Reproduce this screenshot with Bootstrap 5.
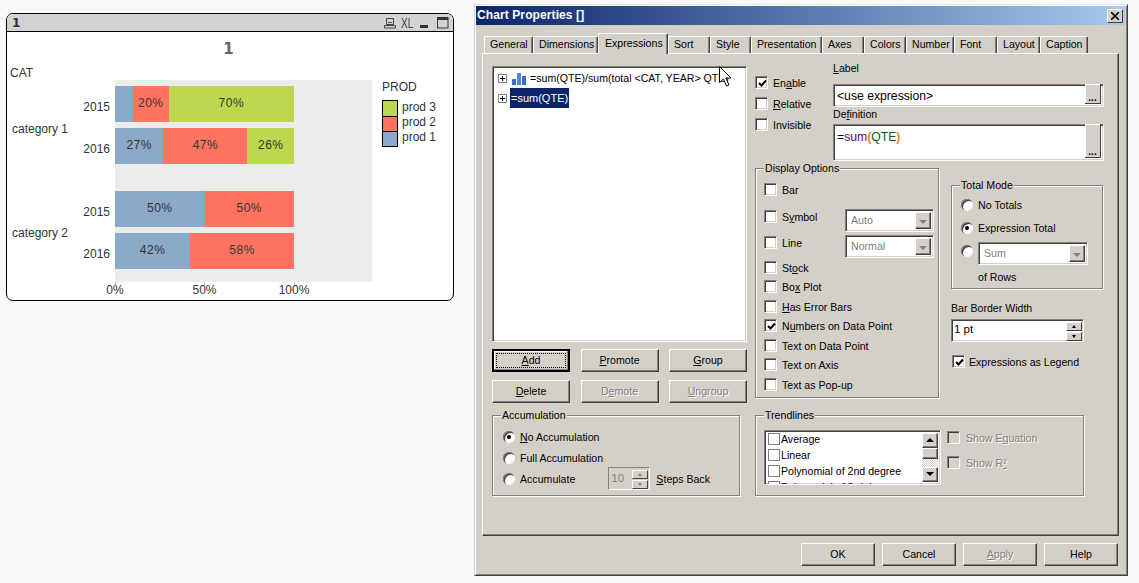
<!DOCTYPE html>
<html lang="en">
<head>
<meta charset="utf-8">
<title>Chart Properties</title>
<link rel="stylesheet" href="https://cdn.jsdelivr.net/npm/bootstrap@5.3.0/dist/css/bootstrap.min.css">
<style>
html,body{height:100%;margin:0;overflow:hidden}
body{background:#f9f9f9;font-family:"Liberation Sans",Arial,sans-serif;font-size:10.6px;color:#000;line-height:19px}
u{text-underline-offset:1px}
/* chart window */
.qv-win{position:absolute;left:6px;top:13px;width:448px;height:288px;border:1px solid #000;border-radius:7px;background:#fff;overflow:hidden;color:#333;font-size:12px;line-height:14px}
.qv-head{height:18px;background:#d3d3d3;border-bottom:1px solid #000;padding:0 4px 0 5px}
.qv-num{font:bold 12px/18px "DejaVu Sans",sans-serif;color:#333}
.qv-xl{font:14px/16px "Liberation Sans",sans-serif;color:#444;width:10px;margin-left:5px;display:inline-block;transform:scaleX(.72);transform-origin:left center}
.qv-title{font:bold 15px/20px "DejaVu Sans",sans-serif;color:#666;text-align:center;height:20px;margin-top:7px;padding-right:3px}
.qv-chart{margin-top:-3px}
.c-cat{width:68px;padding-left:4px;padding-top:10px}
.c-cat div:nth-child(1){margin-left:-1px}
.c-cat div:nth-child(2){margin-top:42px;margin-left:1px}
.c-cat div:nth-child(3){margin-top:90px;margin-left:1px}
.c-year{width:40px;padding-top:33px;padding-right:5px;text-align:right}
.c-year div{height:36px;line-height:36px;margin-bottom:6px}
.c-year div:nth-child(2){margin-bottom:27px}
.c-plot-wrap{width:257px}
.c-plot{height:202px;background:#ececec;padding-top:6px;margin-top:24px}
.c-bar{height:36px;width:179px;margin-bottom:6px;line-height:35px;text-align:center;letter-spacing:.5px}
.c-bar:nth-child(2){margin-bottom:27px}
.s-b{background:#8ca9c9}.s-r{background:#ff7360}.s-g{background:#bcd750}
.c-axis{width:179px}
.c-tick{width:0;display:flex;flex-direction:column;align-items:center;white-space:nowrap}
.c-tick i{display:block;width:1px;height:3px;background:#bbb;flex:none}
.c-tick span{line-height:13px;margin-top:-1px}
.c-leg{margin-left:10px;padding-top:24px}
.c-leg-t{height:15px;line-height:14px}
.c-leg-box{border:1px solid #000;margin-top:5px;width:16px}
.c-leg-box div{height:15px}
.c-leg-box div+div{border-top:1px solid #000}
.c-leg-lab{margin-top:5px}
.c-leg-lab div{height:15px;line-height:15px}
/* dialog */
.dlg{position:absolute;left:474px;top:4px;width:654px;height:572px;background:#d4d0c8;border:1px solid;border-color:#e8e6e1 #404040 #404040 #d4d0c8;box-shadow:inset 1px 1px 0 #fff,inset -1px -1px 0 #808080;padding:1px}
.dlg-bar{height:19px;width:649px;background:linear-gradient(90deg,#0a246a,#a6caf0);color:#fff;font-weight:bold;font-size:12px;line-height:19px;padding:0 2px 0 1px;letter-spacing:.1px}
.dlg-x{width:16px;height:14px;background:#d4d0c8;border:1px solid;border-color:#fff #404040 #404040 #fff}
.tabs{margin:8px 0 0 8px;height:20px;flex-wrap:nowrap;list-style:none;padding:0;position:relative;z-index:1}
.tabs li{height:17px;margin-top:3px;border:1px solid;border-color:#fff #404040 #d4d0c8 #fff;border-bottom:0;border-radius:2px 2px 0 0;text-align:left;padding-left:5px;white-space:nowrap;line-height:15px;background:#d4d0c8;box-shadow:inset -1px 0 0 #808080;flex:none}
.tabs li:nth-child(1){width:49px}.tabs li:nth-child(2){width:65px}.tabs li:nth-child(3){width:70px}.tabs li:nth-child(4){width:42px}
.tabs li:nth-child(5){width:41px}.tabs li:nth-child(6){width:71px}.tabs li:nth-child(7){width:42px}.tabs li:nth-child(8){width:42px}
.tabs li:nth-child(9){width:48px}.tabs li:nth-child(10){width:43px}.tabs li:nth-child(11){width:43px}.tabs li:nth-child(12){width:48px}
.tabs li.on{height:21px;margin-top:0;line-height:19px;padding-left:6px}
.panel{margin-left:6px;width:637px;height:483px;border:1px solid;border-color:#fff #404040 #404040 #fff;box-shadow:inset -1px -1px 0 #808080;padding:12px 0 0 9px}
.sunk{background:#fff;border:1px solid;border-color:#808080 #fff #fff #808080;box-shadow:inset 1px 1px 0 #404040,inset -1px -1px 0 #d4d0c8}
.col-left{width:255px;flex:none}
.tree{height:276px;padding:1px 0 0 4px;overflow:hidden;white-space:nowrap}
.tree-row{height:20px;line-height:20px;gap:3px;font-size:11px}
.tree-first{font-size:10.6px;gap:3px}
.tree-ico{margin-left:2px;margin-right:0}
.expander{width:9px;height:9px;background:#fff;border:1px solid #808080;flex:none;position:relative;margin-left:1px}
.expander::before{content:"";position:absolute;left:1px;top:3px;width:5px;height:1px;background:#000}
.expander::after{content:"";position:absolute;left:3px;top:1px;width:1px;height:5px;background:#000}
.sel{background:#0a246a;color:#fff;padding:0 1px}
.wbtn.btn{--bs-btn-padding-x:0;--bs-btn-padding-y:0;--bs-btn-font-size:10.6px;--bs-btn-line-height:19px;--bs-btn-border-radius:0;--bs-btn-color:#000;--bs-btn-bg:#d4d0c8;--bs-btn-hover-bg:#d4d0c8;--bs-btn-border-width:1px;width:78px;height:23px;border-color:#fff #404040 #404040 #fff;box-shadow:inset -1px -1px 0 #808080;font-family:inherit;text-align:center}
.wbtn.off{color:#808080;text-shadow:1px 1px 0 #fff}
.wbtn.def{outline:1px solid #000;outline-offset:-1px;border:2px solid #000;position:relative;box-shadow:inset -1px -1px 0 #808080,inset 1px 1px 0 #fff}
.wbtn.def::after{content:"";position:absolute;inset:2px;border:1px dotted #000}
.wbtn.wide{width:74px}
.btn-row2{margin-top:8px}
.btn-row1{margin-top:7px}
.col-right{margin-left:8px;width:349px;flex:none}
.chk-col{width:78px;padding-top:7px;flex:none}
.line19{height:19px;line-height:19px;white-space:nowrap}
.line19>span:not(.cb):not(.rd):not(.spn-lab){padding-top:2px}
.chk-col .line19{gap:5px;margin-bottom:2px}
.cb{width:13px;height:13px;flex:none;display:block;position:relative}
.cb svg{position:absolute;left:1px;top:1px}
.cb.dis{background:#d4d0c8}
.lab-col{width:271px;margin-top:-6px}
.lab16{height:16px;line-height:17px}
.defn{margin-top:-1px;line-height:16px}
.inp{height:23px;padding-left:3px;line-height:23px;font-size:12.2px;position:relative}
.more{position:absolute;right:2px;bottom:2px;width:16px;background:#d4d0c8;border-right:1px solid #404040;border-bottom:1px solid #404040;text-align:center;font-weight:bold;font-size:10px;line-height:12px;height:20px;padding-top:8px;box-shadow:inset 1px 1px 0 #fff}
.txta{height:37px;margin-top:2px;padding:1px 0 0 3px}
.more.tall{height:34px;padding-top:22px}
.syn-p{color:#5a0a6e}.syn-g{color:#0a5a14}.syn-o{color:#ff7a1e;font-weight:bold}
.grp{border:1px solid #808080;box-shadow:1px 1px 0 #fff,inset 1px 1px 0 #fff;position:relative}
.grp-t{position:absolute;left:8px;top:-8px;background:#d4d0c8;padding:0 1px;line-height:15px;white-space:nowrap}
.g-disp{width:184px;height:230px;margin-top:7px;padding:11px 4px 0 8px;flex:none}
.g-disp .line19{gap:5px}
.s7{margin-top:7px}.s1{margin-top:1px}.s0{margin-top:0}
.sel-box{height:23px;background:#fff;color:#808080;padding-left:5px;line-height:21px;position:relative;font-size:10.6px}
.sel-a{width:89px;margin:3px 0 0 auto}
.sel-b{width:110px;margin-top:1px}
.arr{position:absolute;right:2px;top:2px;bottom:2px;width:16px;background:#d4d0c8;border:1px solid;border-color:#fff #404040 #404040 #fff;box-shadow:inset -1px -1px 0 #808080}
.line19>.sel-box>.arr{padding:0}
.arr::after{content:"";position:absolute;left:3px;top:7px;border:4px solid transparent;border-top:4px solid #808080;border-bottom:0}
.col-tot{margin-left:12px;width:152px}
.g-tot{height:104px;margin-top:24px;padding:9px 0 0 9px}
.rd{width:12px;height:12px;border-radius:50%;background:#fff;flex:none;display:block;position:relative;box-shadow:inset 1px 1px 0 #808080,inset 2px 2px 0 #404040,inset -1px -1px 0 #f4f3f0;border:0}
.rd.on::after{content:"";position:absolute;left:4px;top:4px;width:4px;height:4px;border-radius:50%;background:#000}
.rd.raised{margin-bottom:4px}
.g-tot .line19{gap:5px}
.m4{margin-top:4px}.m5{margin-top:5px}.m6{margin-top:6px}
.ofrows{margin-left:17px;padding-top:1px}
.bbw{margin-top:11px;height:16px;line-height:16px}
.bbw-in{width:133px;height:23px;margin-top:3px;padding-left:2px;line-height:19px;font-size:11.5px;position:relative}
.spin{position:absolute;right:1px;top:2px;width:16px;height:19px}
.spin i{display:block;height:9px;background:#d4d0c8;border:1px solid;border-color:#fff #404040 #404040 #fff;position:relative;margin-bottom:1px}
.spin i::after{content:"";position:absolute;left:5px;top:2px;border:2px solid transparent;border-bottom:3px solid #000;border-top:0}
.spin i+i::after{border-top:3px solid #000;border-bottom:0}
.spin.dim i::after{border-bottom-color:#808080;border-top-color:#808080}
.leg-chk{margin-top:10px;gap:4px;margin-left:1px}
.bottom-row{margin-top:12px}
.g-acc{width:248px;height:81px;padding:11px 0 0 10px;flex:none}
.g-acc .line19{gap:5px}
.m2{margin-top:2px}
.spn-box{width:42px;height:23px;margin-left:28px;background:#d4d0c8;color:#808080;border:1px solid;border-color:#808080 #fff #fff #808080;padding-left:2px;position:relative;line-height:21px;font-size:11.5px;flex:none}
.spn-lab{margin-left:1px;margin-top:1px;align-self:flex-start}
.g-trend{width:329px;height:81px;margin-left:15px;padding:14px 0 0 8px;flex:none;gap:6px}
.lstb{width:177px;height:55px;overflow:hidden;position:relative;padding:0 0 0 3px}
.lst-i{height:16px;line-height:16px;gap:1px;white-space:nowrap;font-size:10.6px}
.cb.flat{width:12px;height:12px;border:1px solid #808080;background:#fff;box-shadow:none}
.sb{position:absolute;right:2px;top:2px;bottom:2px;width:16px;background:repeating-conic-gradient(#d4d0c8 0 25%,#fff 0 50%) 0 0/2px 2px}
.sb b{display:block;background:#d4d0c8;border:1px solid;border-color:#fff #404040 #404040 #fff;box-shadow:inset -1px -1px 0 #808080;position:relative}
.sb .up,.sb .dn{height:15px}
.sb .th{height:11px}
.sb .dn{position:absolute;left:0;right:0;bottom:0}
.sb .up::after,.sb .dn::after{content:"";position:absolute;left:3px;top:4px;border:4px solid transparent}
.sb .up::after{border-bottom:4px solid #000;border-top:0}
.sb .dn::after{border-top:4px solid #000;border-bottom:0}
.tr-opts{color:#808080;text-shadow:1px 1px 0 #fff;margin-top:-2px}
.tr-opts .line19{gap:6px}
.tr-opts .line19>span:not(.cb){padding-top:0}
.tr-opts .gap6{margin-top:6px}
.foot{margin-top:7px;width:636px;margin-left:6px;gap:7px}
.cursor{position:absolute;left:719px;top:66px;z-index:5}
</style>
</head>
<body>
<section class="qv-win d-flex flex-column">
  <div class="qv-head d-flex align-items-center justify-content-between">
    <span class="qv-num">1</span>
    <div class="d-flex align-items-center">
      <svg width="12" height="12" viewBox="0 0 12 12" fill="none" stroke="#444"><path d="M2.5 1.5h7v6h-7zM.5 8.5h11v2.5H.5zM4 5.5h4"/></svg>
      <span class="qv-xl">XL</span>
      <svg class="ms-2" width="10" height="10" viewBox="0 0 10 10"><rect x="1" y="7" width="8" height="3" fill="#333"/></svg>
      <svg class="ms-2" width="12" height="12" viewBox="0 0 12 12" fill="none" stroke="#333"><rect x=".5" y=".5" width="10.5" height="10.5"/><path d="M0 2h11" stroke-width="2"/></svg>
    </div>
  </div>
  <div class="qv-title">1</div>
  <div class="qv-chart d-flex">
    <div class="c-cat"><div>CAT</div><div>category 1</div><div>category 2</div></div>
    <div class="c-year"><div>2015</div><div>2016</div><div>2015</div><div>2016</div></div>
    <div class="c-plot-wrap">
      <div class="c-plot">
        <div class="c-bar d-flex"><div class="s-b" style="width:10%"></div><div class="s-r" style="width:20%">20%</div><div class="s-g" style="width:70%">70%</div></div>
        <div class="c-bar d-flex"><div class="s-b" style="width:27%">27%</div><div class="s-r" style="width:47%">47%</div><div class="s-g" style="width:26%">26%</div></div>
        <div class="c-bar d-flex"><div class="s-b" style="width:50%">50%</div><div class="s-r" style="width:50%">50%</div></div>
        <div class="c-bar d-flex"><div class="s-b" style="width:42%">42%</div><div class="s-r" style="width:58%">58%</div></div>
      </div>
      <div class="c-axis d-flex justify-content-between">
        <div class="c-tick"><i></i><span>0%</span></div>
        <div class="c-tick"><i></i><span>50%</span></div>
        <div class="c-tick"><i></i><span>100%</span></div>
      </div>
    </div>
    <div class="c-leg">
      <div class="c-leg-t">PROD</div>
      <div class="d-flex gap-1">
        <div class="c-leg-box"><div class="s-g"></div><div class="s-r"></div><div class="s-b"></div></div>
        <div class="c-leg-lab"><div>prod 3</div><div>prod 2</div><div>prod 1</div></div>
      </div>
    </div>
  </div>
</section>

<main class="dlg">
  <div class="dlg-bar d-flex align-items-center justify-content-between">
    <span>Chart Properties []</span>
    <span class="dlg-x d-flex align-items-center justify-content-center"><svg width="8" height="8" viewBox="0 0 8 8" stroke="#000" stroke-width="1.6"><path d="M0 0l8 8M8 0L0 8"/></svg></span>
  </div>
  <ul class="tabs nav">
    <li>General</li><li>Dimensions</li><li class="on">Expressions</li><li>Sort</li><li>Style</li><li>Presentation</li><li>Axes</li><li>Colors</li><li>Number</li><li>Font</li><li>Layout</li><li>Caption</li>
  </ul>
  <div class="panel">
    <div class="d-flex">
      <div class="col-left">
        <div class="tree sunk">
          <div class="tree-row tree-first d-flex align-items-center"><span class="expander"></span>
            <svg class="tree-ico" width="15" height="14" viewBox="0 0 15 14"><rect x="0" y="8" width="4" height="6" fill="#3a6cc0"/><rect x="5" y="2" width="4" height="12" fill="#4f86d8"/><rect x="10" y="5" width="4" height="9" fill="#3a6cc0"/></svg>
            <span>=sum(QTE)/sum(total &lt;CAT, YEAR&gt; QTE)</span></div>
          <div class="tree-row d-flex align-items-center"><span class="expander"></span><span class="sel">=sum(QTE)</span></div>
        </div>
        <div class="d-flex justify-content-between btn-row1">
          <button class="btn wbtn def" type="button"><u>A</u>dd</button>
          <button class="btn wbtn" type="button"><u>P</u>romote</button>
          <button class="btn wbtn" type="button"><u>G</u>roup</button>
        </div>
        <div class="d-flex justify-content-between btn-row2">
          <button class="btn wbtn" type="button"><u>D</u>elete</button>
          <button class="btn wbtn off" type="button">D<u>e</u>mote</button>
          <button class="btn wbtn off" type="button"><u>U</u>ngroup</button>
        </div>
      </div>
      <div class="col-right">
        <div class="d-flex">
          <div class="chk-col">
            <div class="line19 d-flex align-items-center"><span class="cb sunk"><svg width="11" height="11" viewBox="0 0 11 11"><path d="M2 5l2.5 2.5L9 2.5" fill="none" stroke="#000" stroke-width="2"/></svg></span><span>En<u>a</u>ble</span></div>
            <div class="line19 d-flex align-items-center"><span class="cb sunk"></span><span><u>R</u>elative</span></div>
            <div class="line19 d-flex align-items-center"><span class="cb sunk"></span><span>Invisible</span></div>
          </div>
          <div class="lab-col">
            <div class="lab16"><u>L</u>abel</div>
            <div class="inp sunk mt-2">&lt;use expression&gt;<span class="more">...</span></div>
            <div class="lab16 defn">De<u>f</u>inition</div>
            <div class="inp txta sunk">=<span class="syn-p">sum</span><span class="syn-o">(</span><span class="syn-g">QTE</span><span class="syn-o">)</span><span class="more tall">...</span></div>
          </div>
        </div>
        <div class="d-flex">
          <div class="g-disp grp d-flex flex-column">
            <span class="grp-t">Display Options</span>
            <div class="line19 d-flex align-items-center"><span class="cb sunk"></span><span>Bar</span></div>
            <div class="line19 d-flex align-items-start s7"><span class="cb sunk mt-1"></span><span>S<u>y</u>mbol</span><div class="sel-box sunk sel-a">Auto<span class="arr"></span></div></div>
            <div class="line19 d-flex align-items-start s7"><span class="cb sunk mt-1"></span><span>Line</span><div class="sel-box sunk sel-a">Normal<span class="arr"></span></div></div>
            <div class="line19 d-flex align-items-center s7"><span class="cb sunk"></span><span>St<u>o</u>ck</span></div>
            <div class="line19 d-flex align-items-center s0"><span class="cb sunk"></span><span>Bo<u>x</u> Plot</span></div>
            <div class="line19 d-flex align-items-center s1"><span class="cb sunk"></span><span><u>H</u>as Error Bars</span></div>
            <div class="line19 d-flex align-items-center s0"><span class="cb sunk"><svg width="11" height="11" viewBox="0 0 11 11"><path d="M2 5l2.5 2.5L9 2.5" fill="none" stroke="#000" stroke-width="2"/></svg></span><span>N<u>u</u>mbers on Data Point</span></div>
            <div class="line19 d-flex align-items-center s1"><span class="cb sunk"></span><span>Text on Data Point</span></div>
            <div class="line19 d-flex align-items-center s0"><span class="cb sunk"></span><span>Text on Axis</span></div>
            <div class="line19 d-flex align-items-center s1"><span class="cb sunk"></span><span>Text as Pop-up</span></div>
          </div>
          <div class="col-tot">
            <div class="g-tot grp">
              <span class="grp-t">Total Mode</span>
              <div class="line19 d-flex align-items-center"><span class="rd"></span><span>No Totals</span></div>
              <div class="line19 d-flex align-items-center m4"><span class="rd on"></span><span>Expression Total</span></div>
              <div class="line19 d-flex align-items-center m6"><span class="rd raised"></span><div class="sel-box sunk sel-b">Sum<span class="arr"></span></div></div>
              <div class="line19 ofrows m5">of Rows</div>
            </div>
            <div class="bbw">Bar Border Width</div>
            <div class="bbw-in sunk">1 pt<span class="spin"><i></i><i></i></span></div>
            <div class="line19 d-flex align-items-center leg-chk"><span class="cb sunk"><svg width="11" height="11" viewBox="0 0 11 11"><path d="M2 5l2.5 2.5L9 2.5" fill="none" stroke="#000" stroke-width="2"/></svg></span><span>Expressions as Legend</span></div>
          </div>
        </div>
      </div>
    </div>
    <div class="d-flex bottom-row">
      <div class="g-acc grp">
        <span class="grp-t">Accumulation</span>
        <div class="line19 d-flex align-items-center"><span class="rd on"></span><span><u>N</u>o Accumulation</span></div>
        <div class="line19 d-flex align-items-center m2"><span class="rd"></span><span>Full Accumulation</span></div>
        <div class="line19 d-flex align-items-center m2"><span class="rd"></span><span>Accumulate</span>
          <div class="spn-box">10<span class="spin dim"><i></i><i></i></span></div>
          <span class="spn-lab"><u>S</u>teps Back</span>
        </div>
      </div>
      <div class="g-trend grp d-flex">
        <span class="grp-t">Trendlines</span>
        <div class="lstb sunk">
          <div class="lst-i d-flex align-items-center"><span class="cb flat"></span><span>Average</span></div>
          <div class="lst-i d-flex align-items-center"><span class="cb flat"></span><span>Linear</span></div>
          <div class="lst-i d-flex align-items-center"><span class="cb flat"></span><span>Polynomial of 2nd degree</span></div>
          <div class="lst-i d-flex align-items-center"><span class="cb flat"></span><span>Polynomial of 3rd degree</span></div>
          <div class="sb"><b class="up"></b><b class="th"></b><b class="dn"></b></div>
        </div>
        <div class="tr-opts">
          <div class="line19 d-flex align-items-center"><span class="cb sunk dis"></span><span>Show E<u>q</u>uation</span></div>
          <div class="line19 d-flex align-items-center gap6"><span class="cb sunk dis"></span><span>Show R<u>²</u></span></div>
        </div>
      </div>
    </div>
  </div>
  <div class="foot d-flex justify-content-end">
    <button class="btn wbtn wide" type="button">OK</button>
    <button class="btn wbtn wide" type="button">Cancel</button>
    <button class="btn wbtn wide off" type="button"><u>A</u>pply</button>
    <button class="btn wbtn wide" type="button">Help</button>
  </div>
</main>
<svg class="cursor" width="12" height="22" viewBox="0 0 12 22"><path d="M.5.5v16l4-3.5 3 7 2.5-1-3-7h5z" fill="#fff" stroke="#000"/></svg>
</body>
</html>
